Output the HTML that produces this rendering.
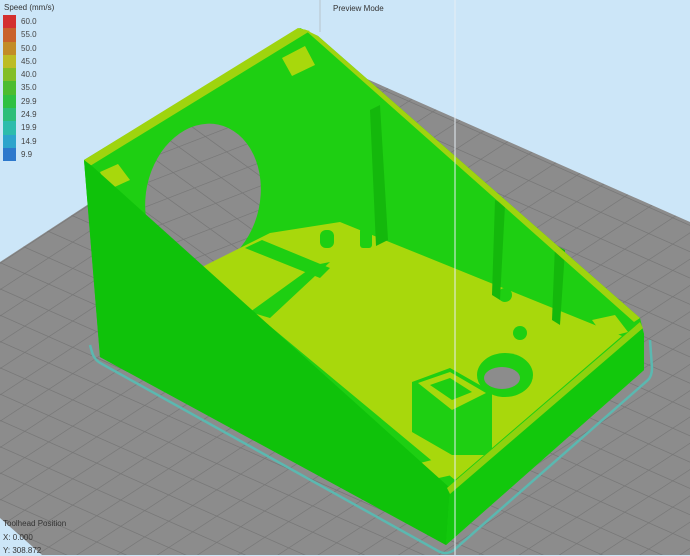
<!DOCTYPE html>
<html><head><meta charset="utf-8"><style>
html,body{margin:0;padding:0;width:690px;height:555px;overflow:hidden;background:#cce6f8;font-family:"Liberation Sans",sans-serif}
svg{position:absolute;left:0;top:0}
.t{position:absolute;font-size:8px;color:#333;line-height:10px}
.leg{position:absolute;left:3px;top:15px}
.leg div{height:13.3px;width:60px;position:relative}
.leg span{display:inline-block;width:13px;height:13.3px;vertical-align:top}
.leg b{font-weight:normal;font-size:8px;color:#444;position:absolute;left:18px;top:2px}
</style></head><body>
<svg width="690" height="555" viewBox="0 0 690 555">
<defs>
<pattern id="g" patternUnits="userSpaceOnUse" width="1" height="1" patternTransform="matrix(24 10.6 24 -15.7 0 0)">
<rect width="1" height="1" fill="#8c8c8c"/>
<path d="M0 0H1M0 0V1" stroke="#767676" stroke-width="0.06" fill="none"/>
</pattern>
</defs>
<polygon points="0,262 315,56 690,222 690,555 42,555 0,518" fill="url(#g)"/>
<path d="M90,345 L92,352 Q94,360 102,364 L440,552 Q447,555 454,550 L648,380 Q652,376 652,368 L650,340" fill="none" stroke="#5bb8b0" stroke-width="2.5"/>
<!-- green underlay for whole model -->
<polygon points="84,160 300,28 318,36 640,318 644,334 644,370 446,545 100,357" fill="#1ecf12"/>
<!-- hole -->
<ellipse cx="203" cy="197" rx="57" ry="74" transform="rotate(12 203 197)" fill="url(#g)"/>
<!-- floor -->
<polygon points="200,268 270,233 340,222 622,336 455,480" fill="#a8d80c"/>
<polygon points="245,248 262,240 330,268 320,278" fill="#1ecf12"/>
<polygon points="315,265 330,262 270,318 250,312" fill="#1ecf12"/>
<rect x="320" y="230" width="14" height="18" rx="6" fill="#1ecf12"/>
<rect x="360" y="228" width="12" height="20" rx="3" fill="#1ecf12"/>
<circle cx="505" cy="295" r="7" fill="#1ecf12"/>
<circle cx="520" cy="333" r="7" fill="#1ecf12"/>
<polygon points="370,110 380,105 388,240 376,246" fill="#14b80c"/>
<polygon points="495,200 505,205 500,300 492,295" fill="#14b80c"/>
<polygon points="555,245 565,250 560,325 552,320" fill="#14b80c"/>
<ellipse cx="505" cy="375" rx="28" ry="22" fill="#1ecf12"/>
<ellipse cx="502" cy="378" rx="18" ry="11" fill="#8c8c8c"/>
<polygon points="412,382 450,368 492,392 492,455 452,455 412,432" fill="#1ecf12"/>
<polygon points="418,383 450,372 486,393 452,410" fill="#a8d80c"/>
<polygon points="430,385 450,378 472,392 452,400" fill="#1ecf12"/>
<polygon points="282,58 305,46 315,65 292,76" fill="#a8d80c"/>
<polygon points="100,172 118,164 130,180 108,190" fill="#a8d80c"/>
<polygon points="592,320 615,315 628,332 605,338" fill="#a8d80c"/>
<polygon points="420,463 440,458 452,475 430,480" fill="#a8d80c"/>
<!-- back wall top rim (thin) -->
<polygon points="84,160 298,28 310,31 90,166" fill="#9fd40e"/>
<!-- right wall slope rim -->
<polygon points="304,29 318,36 640,318 634,322" fill="#9fd40e"/>
<!-- left outer face -->
<polygon points="84,160 92,166 450,488 446,545 100,357" fill="#0fc20a"/>
<!-- front right face -->
<polygon points="450,488 640,322 644,334 644,370 446,545" fill="#12c80c"/>
<polygon points="447,488 640,322 643,328 450,494" fill="#8ed20e"/>
<line x1="455" y1="0" x2="455" y2="555" stroke="#e6eef4" stroke-width="1"/>
<line x1="320" y1="0" x2="320" y2="32" stroke="#b8c4cc" stroke-width="1"/>
</svg>
<div class="t" style="left:4px;top:3px">Speed (mm/s)</div>
<div class="leg">
<div><span style="background:#d33030"></span><b>60.0</b></div>
<div><span style="background:#c9622c"></span><b>55.0</b></div>
<div><span style="background:#c28c28"></span><b>50.0</b></div>
<div><span style="background:#bcbc26"></span><b>45.0</b></div>
<div><span style="background:#82be28"></span><b>40.0</b></div>
<div><span style="background:#4cbc30"></span><b>35.0</b></div>
<div><span style="background:#2ec043"></span><b>29.9</b></div>
<div><span style="background:#2cbe7a"></span><b>24.9</b></div>
<div><span style="background:#2cbcac"></span><b>19.9</b></div>
<div><span style="background:#2ca4cc"></span><b>14.9</b></div>
<div><span style="background:#2c78cc"></span><b>9.9</b></div>
</div>
<div class="t" style="left:333px;top:4px">Preview Mode</div>
<div class="t" style="left:3px;top:519px">Toolhead Position</div>
<div class="t" style="left:3px;top:533px">X: 0.000</div>
<div class="t" style="left:3px;top:546px">Y: 308.872</div>
</body></html>
